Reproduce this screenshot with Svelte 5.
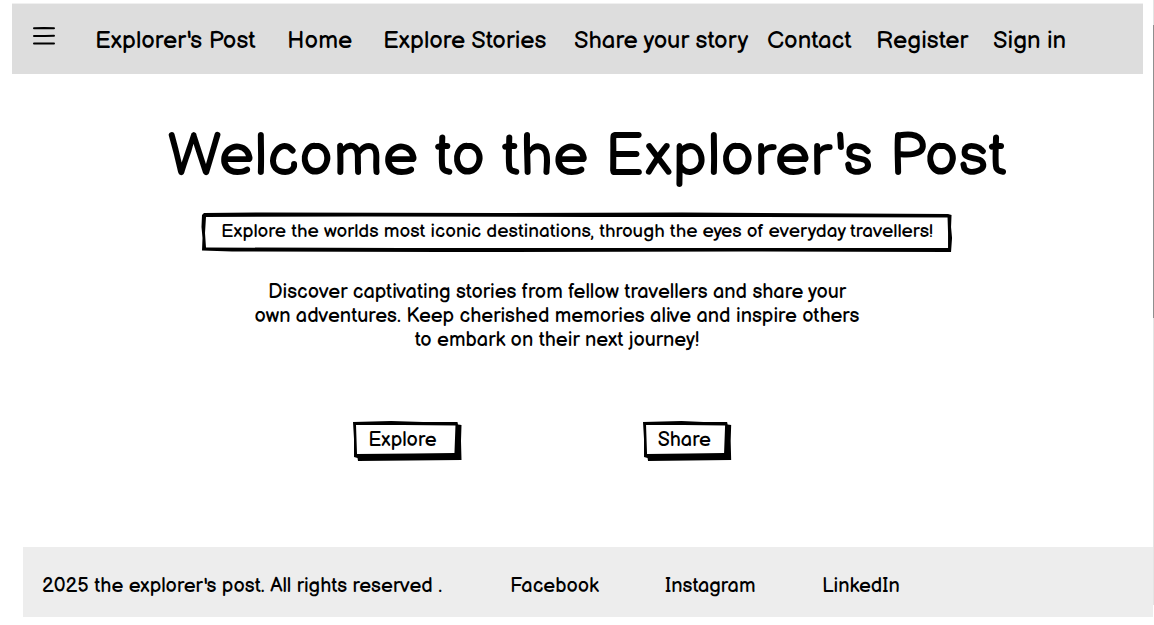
<script>
  const navLinks = [
    "Explorer's Post",
    'Home',
    'Explore Stories',
    'Share your story',
    'Contact',
    'Register',
    'Sign in',
  ];
  const socials = ['Facebook', 'Instagram', 'LinkedIn'];
</script>

<div class="page">
  <header>
    <nav>
      <button class="menu" aria-label="Menu">
        <svg width="22" height="20" viewBox="0 0 22 20" fill="none" stroke="#000" stroke-width="2" stroke-linecap="round">
          <path d="M1 2.3 11 2.1 21 2.2" />
          <path d="M1 9.9 12 10 21 9.8" />
          <path d="M1 17.4 10 17.5 21 17.4" />
        </svg>
      </button>
      {#each navLinks as label}
        <a href="#top">{label}</a>
      {/each}
    </nav>
  </header>

  <main>
    <h1>Welcome to the Explorer's Post</h1>

    <p class="tagline">
      <svg class="frame" viewBox="0 0 750 39" preserveAspectRatio="none" aria-hidden="true">
        <path fill-rule="evenodd" d="M2 0 60 -0.5 300 0 480 -0.5 746 1 749.5 2 749 14 750 25 749 39 746 39 540 38.5 240 39 30 38.5 0 37.5 0.5 25 -0.5 14 0 2ZM4 4 3 20 4 34.500 200 35 430 35 746 35 746 20 745.5 4.500 520 4 390 4 160 3.500Z" />
      </svg>
      Explore the worlds most iconic destinations, through the eyes of everyday travellers!
    </p>

    <p class="intro">
      Discover captivating stories from fellow travellers and share your<br />
      own adventures. Keep cherished memories alive and inspire others<br />
      to embark on their next journey!
    </p>

    <div class="actions">
      <button class="explore">
        <svg class="frame" viewBox="0 0 108 40" preserveAspectRatio="none" aria-hidden="true">
          <path fill-rule="evenodd" d="M0 1 38 0 70 1 104 1 104.5 3.5 108 4 107.5 20 108 39 5 40 4.5 37 1 36 1 18ZM3 4 4 33 60 32.5 101 32 102 4.5 50 4Z" />
        </svg>
        Explore
      </button>
      <button class="share">
        <svg class="frame" viewBox="0 0 87 40" preserveAspectRatio="none" aria-hidden="true">
          <path fill-rule="evenodd" d="M0 1 38 0 60 1 83 1 83.5 3.5 87 4 86.5 20 87 39 5 40 4.5 37 1 36 1 18ZM3 4 4 33 45 32.5 80 32 81 4.5 40 4Z" />
        </svg>
        Share
      </button>
    </div>
  </main>

  <footer>
    <span>2025 the explorer's post. All rights reserved .</span>
    {#each socials as label}
      <a href="#top">{label}</a>
    {/each}
  </footer>

  <div class="track"><div class="thumb"></div></div>
</div>

<style>
  :global(body) {
    background: #fff;
  }

  .page {
    position: relative;
    box-sizing: border-box;
    padding: 3px 0 8px;
    color: #000;
    font-family: 'Balsamiq Sans', Lato, sans-serif;
    font-size: 20px;
    line-height: 24px;
  }

  a {
    color: inherit;
    text-decoration: none;
    white-space: nowrap;
  }

  button {
    border: 0;
    padding: 0;
    background: none;
    color: inherit;
    font: inherit;
    cursor: pointer;
  }

  header {
    margin: 0 11px 0 12px;
    border-top: 1px solid #f0f0f0;
    background: #ddd;
  }

  nav {
    box-sizing: border-box;
    display: grid;
    grid-template-columns: 62fr 192fr 96fr 191fr 193fr 109fr 117fr 150fr;
    align-items: center;
    min-height: 70px;
    padding: 4px 0 0 21px;
    font-size: 24px;
  }

  .menu {
    justify-self: start;
    display: flex;
    padding-bottom: 10px;
  }

  main {
    display: flex;
    flex-direction: column;
    align-items: center;
  }

  h1 {
    margin: 47px 0 0 20px;
    font-size: 60px;
    line-height: 72px;
    font-weight: 400;
  }

  p {
    margin: 0;
  }

  .frame {
    position: absolute;
    inset: 0;
    width: 100%;
    height: 100%;
    overflow: visible;
  }

  .tagline {
    position: relative;
    margin-top: 20px;
    padding: 7px 19px 8px;
    font-size: 19px;
  }

  .intro {
    margin: 28px 40px 0 0;
    text-align: center;
  }

  .actions {
    display: flex;
    gap: 181px;
    margin: 69px 70px 0 0;
  }

  .actions button {
    position: relative;
    padding: 7px 20px 9px 15px;
    text-align: left;
  }

  .actions .explore {
    padding-right: 25px;
  }

  footer {
    box-sizing: border-box;
    display: grid;
    grid-template-columns: 468fr 155fr 157fr 331fr;
    align-items: center;
    min-height: 70px;
    margin: 86px 1px 0 23px;
    padding: 8px 0 0 19px;
    background: #ededed;
  }

  .track {
    position: absolute;
    top: 0;
    right: 0;
    width: 1px;
    height: 605px;
    background: #e4e4e4;
  }

  .thumb {
    position: relative;
    top: 25px;
    height: 293px;
    background: #8f8f8f;
  }
</style>
